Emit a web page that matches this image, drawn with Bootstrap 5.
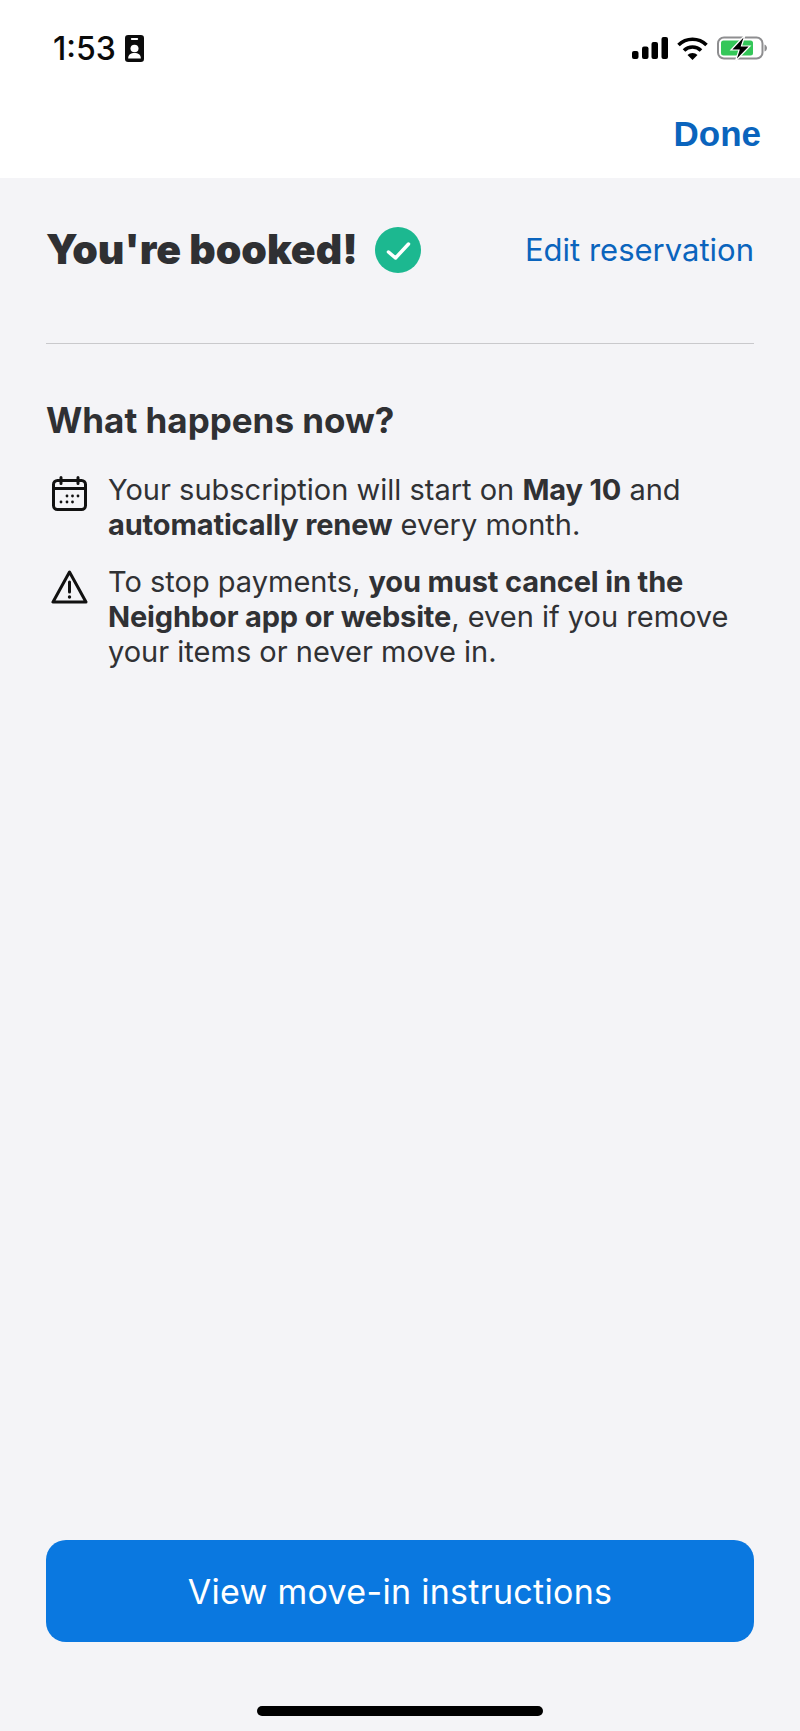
<!DOCTYPE html>
<html lang="en">
<head>
  <meta charset="UTF-8">
  <title>You're booked</title>
  <meta name="viewport" content="width=device-width, initial-scale=1" />
  <link href="https://cdn.jsdelivr.net/npm/bootstrap@5.3.0/dist/css/bootstrap.min.css" rel="stylesheet" />
  <style>
    body {
      margin: 0;
      background-color: #f4f4f7;
      font-family: Inter, "Liberation Sans", sans-serif;
      color: #2f3033;
    }

    .screen {
      height: 1731px;
    }

    .top-area {
      height: 178px;
      background-color: #fff;
    }

    .status-row {
      height: 96px;
      padding: 0 33px 0 53px;
    }

    .status-left {
      gap: 9px;
    }

    .status-right {
      gap: 9px;
    }

    .clock {
      font-size: 32px;
      font-weight: 500;
      line-height: 1;
      color: #0b0b0b;
      padding-top: 2px;
    }

    .done-row {
      height: 82px;
      padding: 0 39px 6px 0;
    }

    .done-link {
      font-family: "Liberation Sans", sans-serif;
      font-size: 35px;
      font-weight: 700;
      color: #0a64bd;
      text-decoration: none;
    }

    .body-area {
      padding: 0 46px;
    }

    .title-row {
      height: 166px;
      border-bottom: 1px solid #c9c9cc;
      padding-bottom: 21px;
    }

    .title-group {
      gap: 17px;
    }

    .booked-title {
      font-size: 41px;
      font-weight: 900;
      margin: 0;
      color: #2f3033;
    }

    .edit-link {
      font-size: 31px;
      color: #0a64bd;
      text-decoration: none;
    }

    .now-title {
      font-size: 35px;
      font-weight: 700;
      margin: 0;
      padding-top: 55px;
      line-height: 42px;
      color: #2f3033;
    }

    .info-row {
      font-size: 29px;
      line-height: 35px;
      color: #303134;
    }

    .info-row b {
      font-weight: 700;
      letter-spacing: -0.15px;
    }

    .first-info {
      margin-top: 31px;
    }

    .second-info {
      margin-top: 22px;
    }

    .info-icon {
      width: 62px;
      flex-shrink: 0;
      padding-left: 5px;
    }

    .info-icon svg {
      display: block;
    }

    .first-info .info-icon {
      padding-top: 4px;
      padding-left: 6px;
    }

    .second-info .info-icon {
      padding-top: 6px;
    }

    .cta-btn {
      height: 102px;
      font-size: 34px;
      border-radius: 20px;
      background-color: #0a78e0;
      border: 0;
      color: #fff;
      letter-spacing: 0.3px;
    }

    .cta-btn:hover {
      background-color: #0a6ccb;
      color: #fff;
    }

    .home-bar {
      width: 286px;
      height: 10px;
      border-radius: 5px;
      background-color: #000;
      margin-top: 64px;
      margin-bottom: 15px;
    }
  </style>
</head>
<body>
  <div class="screen d-flex flex-column">
    <div class="top-area">
      <div class="status-row d-flex justify-content-between align-items-center">
        <div class="status-left d-flex align-items-center">
          <span class="clock">1:53</span>
          <svg width="19" height="27" viewBox="0 0 18 27" preserveAspectRatio="none">
            <rect x="0" y="0" width="18" height="27" rx="3" fill="#0b0b0b"/>
            <rect x="5.500" y="3" width="7" height="2" rx="1" fill="#fff"/>
            <circle cx="9" cy="13.500" r="3.800" fill="#fff"/>
            <path d="M3 23.500c0-4 2.500-5.500 6-5.500s6 1.500 6 5.500z" fill="#fff"/>
          </svg>
        </div>
        <div class="status-right d-flex align-items-center">
          <svg width="36" height="22" viewBox="0 0 36 22" fill="#000">
            <rect x="0" y="14" width="6.500" height="8" rx="2"/>
            <rect x="10" y="9.500" width="6.500" height="12.500" rx="2"/>
            <rect x="19.500" y="5" width="6.500" height="17" rx="2"/>
            <rect x="29.500" y="0" width="6.500" height="22" rx="2"/>
          </svg>
          <svg width="31" height="23" viewBox="0 0 31 23" fill="none" stroke="#000" stroke-width="3.600">
            <path d="M1.500 8a20 20 0 0 1 28 0"/>
            <path d="M7 13.500a12 12 0 0 1 17 0"/>
            <path d="M15.500 23l-5-5a7 7 0 0 1 10 0z" fill="#000" stroke="none"/>
          </svg>
          <svg width="50" height="26" viewBox="0 0 50 26">
            <rect x="1" y="2.500" width="44.500" height="21" rx="6" fill="none" stroke="#8e8e90" stroke-width="2"/>
            <rect x="4" y="5.500" width="32" height="15" rx="2.500" fill="#34c759"/>
            <path d="M47.500 9.500c1.500.5 2.500 2 2.500 3.500s-1 3-2.500 3.500z" fill="#8e8e90"/>
            <path d="M28 0L14 15h8l-3.500 11L33 11h-8.500z" fill="#000" stroke="#fff" stroke-width="1.200"/>
          </svg>
        </div>
      </div>
      <div class="done-row d-flex justify-content-end align-items-center">
        <a href="#" class="done-link">Done</a>
      </div>
    </div>

    <div class="body-area flex-grow-1 d-flex flex-column">
      <div class="title-row d-flex justify-content-between align-items-center">
        <div class="title-group d-flex align-items-center">
          <h1 class="booked-title">You're booked!</h1>
          <svg width="46" height="46" viewBox="0 0 46 46">
            <circle cx="23" cy="23" r="23" fill="#1cb890"/>
            <path d="M13.500 25l7 6L33.500 17" fill="none" stroke="#fff" stroke-width="3.500" stroke-linecap="round" stroke-linejoin="round"/>
          </svg>
        </div>
        <a href="#" class="edit-link">Edit reservation</a>
      </div>

      <h2 class="now-title">What happens now?</h2>

      <div class="info-row first-info d-flex">
        <div class="info-icon">
          <svg width="35" height="35" viewBox="0 0 35 35" fill="none" stroke="#111" stroke-width="3">
            <rect x="1.500" y="4.500" width="32" height="29" rx="4"/>
            <path d="M1.500 12.500h32M9 1.500v6M26 1.500v6" stroke-linecap="round"/>
            <g fill="#111" stroke="none">
              <circle cx="15" cy="20" r="1.400"/><circle cx="20.500" cy="20" r="1.400"/><circle cx="26" cy="20" r="1.400"/>
              <circle cx="9" cy="26" r="1.400"/><circle cx="15" cy="26" r="1.400"/><circle cx="20.500" cy="26" r="1.400"/>
            </g>
          </svg>
        </div>
        <div>Your subscription will start on <b>May 10</b> and<br><b>automatically renew</b> every month.</div>
      </div>

      <div class="info-row second-info d-flex">
        <div class="info-icon">
          <svg width="37" height="34" viewBox="0 0 37 34" fill="none" stroke="#111" stroke-width="3" stroke-linejoin="round">
            <path d="M18.500 2L2 32h33z"/>
            <path d="M18.500 12v10" stroke-linecap="round"/>
            <circle cx="18.500" cy="27" r="1.700" fill="#111" stroke="none"/>
          </svg>
        </div>
        <div>To stop payments, <b>you must cancel in the<br>Neighbor app or website</b>, even if you remove<br>your items or never move in.</div>
      </div>

      <div class="mt-auto pb-0">
        <a href="#" class="btn cta-btn w-100 d-flex align-items-center justify-content-center">View move-in instructions</a>
        <div class="home-bar mx-auto"></div>
      </div>
    </div>
  </div>

  <script src="https://cdn.jsdelivr.net/npm/bootstrap@5.3.0/dist/js/bootstrap.bundle.min.js"></script>
</body>
</html>
